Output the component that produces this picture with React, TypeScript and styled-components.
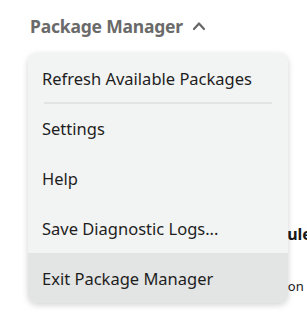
import styled, { createGlobalStyle } from 'styled-components';

const GlobalStyle = createGlobalStyle`
  html, body {
    margin: 0;
    padding: 0;
    background: #ffffff;
    font-family: 'Noto Sans', sans-serif;
  }
`;

interface MenuEntry {
  label: string;
  divider?: boolean;
  active?: boolean;
}

const ENTRIES: MenuEntry[] = [
  { label: 'Refresh Available Packages', divider: true },
  { label: 'Settings' },
  { label: 'Help' },
  { label: 'Save Diagnostic Logs...' },
  { label: 'Exit Package Manager', active: true },
];

const App = () => {
  return (
    <Page>
      <GlobalStyle />
      <Header>
        <Title>Package Manager</Title>
        <svg width="14" height="14" viewBox="0 0 14 14">
          <path d="M2 10 L7 4.5 L12 10" fill="none" stroke="#666" strokeWidth="2.2" strokeLinecap="round" strokeLinejoin="round" />
        </svg>
      </Header>
      <Body>
        <Backdrop>
          <BackLine bold left={252} top={183}>Modules</BackLine>
          <BackLine left={258} top={237}>Version</BackLine>
        </Backdrop>
        <Menu>
          {ENTRIES.map((entry) => (
            <div key={entry.label}>
              <Item active={entry.active}>{entry.label}</Item>
              {entry.divider && <Divider />}
            </div>
          ))}
        </Menu>
      </Body>
    </Page>
  );
};

export default App;

const Page = styled.div`
  width: 307px;
  height: 320px;
  overflow: hidden;
  position: relative;
`;

const Header = styled.div`
  display: flex;
  align-items: center;
  gap: 9px;
  padding: 11px 0 0 30px;
  height: 29px;
`;

const Title = styled.span`
  font-size: 17.5px;
  font-weight: 700;
  color: #6a6a6a;
  letter-spacing: -0.2px;
`;

const Body = styled.div`
  position: relative;
  padding: 13px 0 0 28px;
`;

const Backdrop = styled.div`
  position: absolute;
  inset: 0;
`;

const BackLine = styled.div<{ bold?: boolean; left: number; top: number }>`
  position: absolute;
  left: ${(p) => p.left}px;
  top: ${(p) => p.top}px;
  font-size: ${(p) => (p.bold ? '16px' : '13px')};
  font-weight: ${(p) => (p.bold ? 700 : 400)};
  color: #1a1a1a;
  white-space: nowrap;
`;

const Menu = styled.div`
  position: relative;
  width: 260px;
  background: #f2f3f3;
  border-radius: 9px;
  box-shadow: 0 2px 6px rgba(0, 0, 0, 0.18);
  overflow: hidden;
`;

const Item = styled.div<{ active?: boolean }>`
  height: 50px;
  display: flex;
  align-items: center;
  padding-left: 14px;
  font-size: 16.5px;
  color: #1e1e1e;
  background: ${(p) => (p.active ? '#e3e4e4' : 'transparent')};
`;

const Divider = styled.div`
  height: 2px;
  margin: -1px 16px -1px 16px;
  background: #e2e3e3;
`;
